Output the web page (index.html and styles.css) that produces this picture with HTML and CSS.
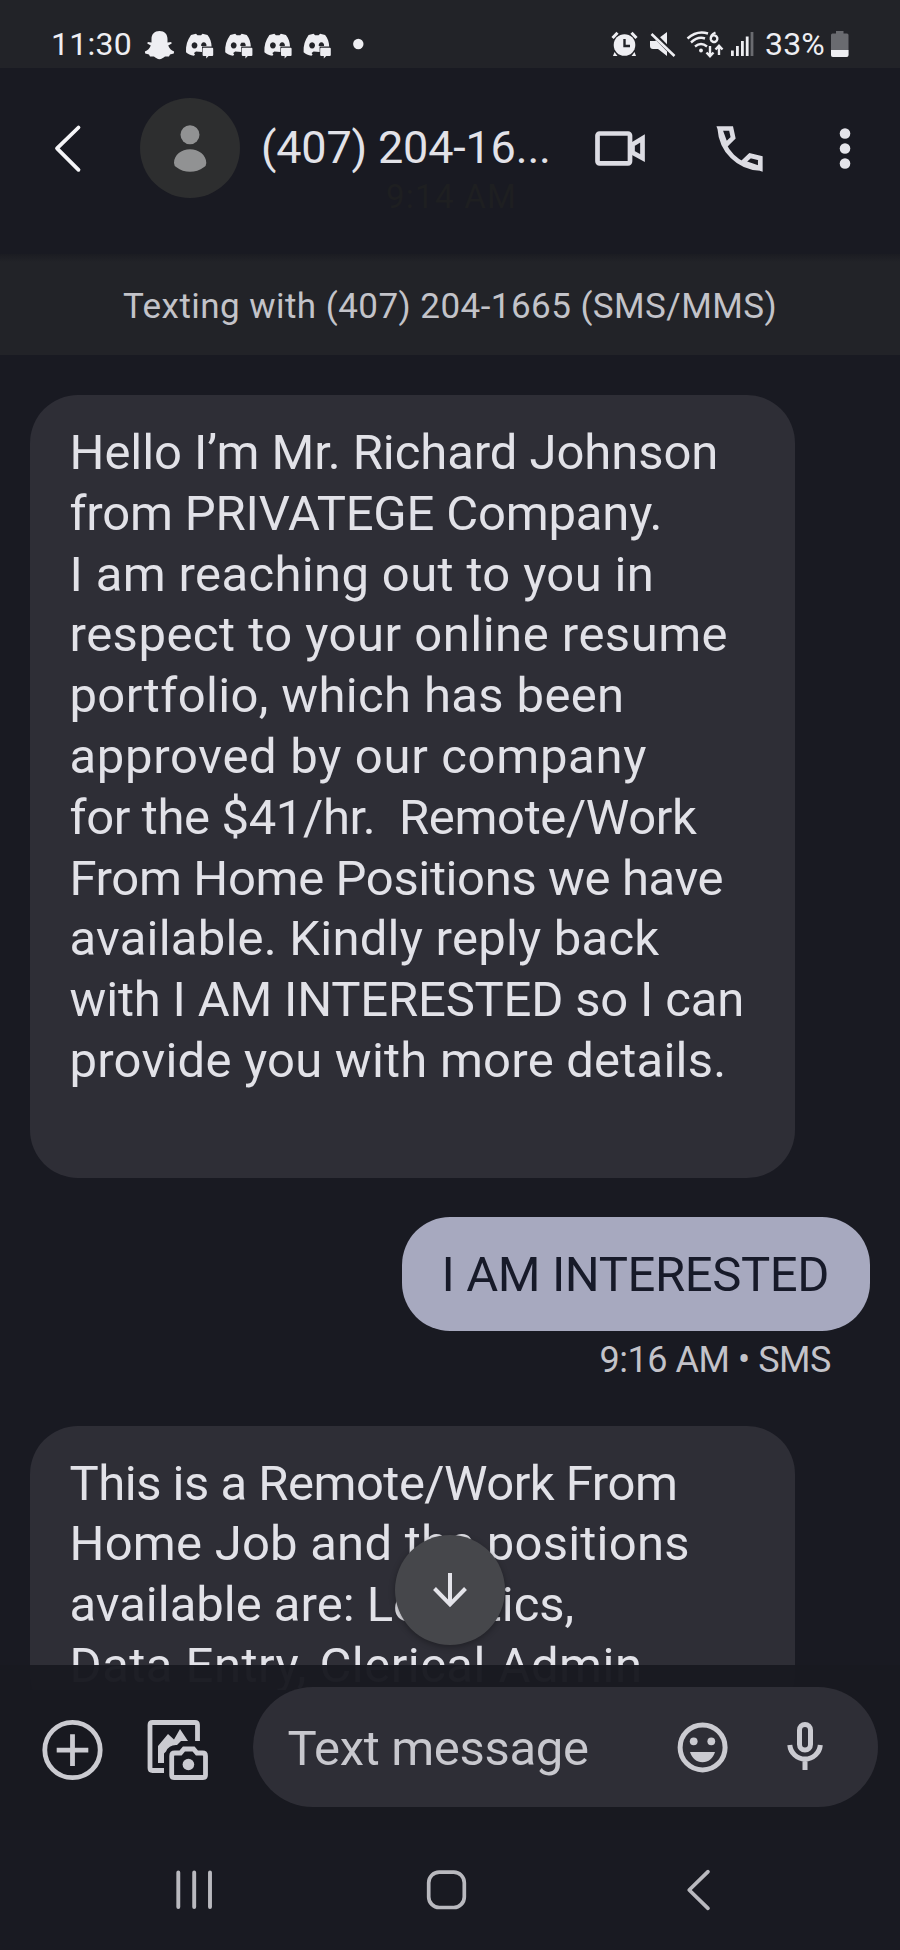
FILE: index.html
```html
<!DOCTYPE html>
<html lang="en">
<head>
<meta charset="utf-8">
<title>Messages</title>
<link rel="stylesheet" href="styles.css">
</head>
<body>
<div class="phone">
  <div class="status">
    <span class="clock">11:30</span>
    <svg class="notif" width="226" height="40" viewBox="140 24 226 40">
      <defs>
        <g id="discord">
          <path fill-rule="evenodd" d="M191 35l5-1.200 1.500 1.400h3.500l1.500-1.400 5 1.200c2.600 3.400 4 7 4.100 11.500h-9.600v5.400l-6-.4-2 1.500 1 1.800-1.200 1c-3.200-.600-5.800-1.800-7.800-3.600-.4-6.500 1.300-12.200 5-17.200zM194.500 42.200a2.900 3.200 0 1 0 .01 0zM203.800 42.200a2.700 3 0 0 0-2.600 3.800h5.200a2.700 3 0 0 0-2.600-3.800z"/>
          <path d="M203.600 47.800h8.600q1 0 1 1v6.200q0 1-1 1h-3.600l-2.400 2.600v-2.600h-2.600q-1 0-1-1v-6.200q0-1 1-1z"/>
        </g>
      </defs>
      <g fill="#eeeef2">
        <path d="M159.500 31c5 0 8 3.200 8 8v3.600l3.700-.7.5 1.700-3.500 2c1.200 3 3 4.800 5.900 6l-.3 1.900-3.800.9-1 2.200-4-.1c-1.800 1.300-3.400 2.700-5.500 2.700s-3.700-1.400-5.500-2.700l-4 .1-1-2.200-3.800-.9-.3-1.900c2.900-1.200 4.700-3 5.900-6l-3.500-2 .5-1.700 3.700.7V39c0-4.800 3-8 8-8z"/>
        <use href="#discord"/>
        <use href="#discord" x="39.200"/>
        <use href="#discord" x="78.400"/>
        <use href="#discord" x="117.600"/>
        <circle cx="358.300" cy="44" r="5.200"/>
      </g>
    </svg>
    <svg class="signals" width="150" height="40" viewBox="608 24 150 40">
      <g fill="#eeeef2">
        <circle cx="624.500" cy="45" r="10.800"/>
        <path d="M614.500 52l-1.500 4h4.500zM634.500 52l1.500 4h-4.500z"/>
        <path d="M612.500 38l5-5.200M636.500 38l-5-5.200" stroke="#eeeef2" stroke-width="3"/>
        <path d="M624.500 39v7h5.500" fill="none" stroke="#222328" stroke-width="2.400"/>
        <path d="M650 41h5l12-9v24l-9-7h-5q-3 0-3-3z"/>
        <path d="M650 30.500l26 26.500" stroke="#222328" stroke-width="5"/>
        <path d="M651.500 34l23 22" stroke="#eeeef2" stroke-width="2.600"/>
        <circle cx="701" cy="50.500" r="1.900"/>
        <path d="M731 50.500h2.800V56H731zM736 46h2.800v10H736zM741 41h2.800v15H741zM745.800 36.500h2.800V56h-2.800z"/>
        <path fill="#6a6b70" d="M750.600 32h2.800v24h-2.800z"/>
      </g>
      <g fill="none" stroke="#eeeef2" stroke-width="2.400">
        <path d="M687.500 38.500q9.500-8.500 20.500-5M691 42.500q7-6.500 14-4M695 46.500q6-4.800 12 0"/>
        <path d="M715.500 32.500c-3 1.200-5 4-4.700 6.700a3.300 3.300 0 1 0 .3-2"/>
        <path d="M710 46v10M706.500 52.500l3.500 3.800 3.500-3.800M719 55V46M715.500 49.500l3.500-3.800 3.500 3.800"/>
      </g>
    </svg>
    <span class="percent">33%</span>
    <svg class="battery" width="20" height="40" viewBox="830 24 20 40">
      <path fill="#6a6b70" d="M836 31h7.500v2.500h3.500q1.500 0 1.500 1.500v20q0 2-2 2h-13.500q-2 0-2-2V35q0-1.500 1.500-1.500h3.500z"/>
      <path fill="#eeeef2" d="M831 50h17.500v5q0 2-2 2H833q-2 0-2-2z"/>
    </svg>
  </div>

  <header class="header">
    <svg class="back" width="40" height="60" viewBox="48 117 40 60">
      <path d="M78.500 126.500L57 147.300l21.500 21.500" fill="none" stroke="#f5f5f8" stroke-width="3.800" stroke-linecap="round" stroke-linejoin="round"/>
    </svg>
    <div class="avatar">
      <svg width="100" height="100" viewBox="140 97 100 100" fill="#919293">
        <circle cx="190" cy="133.700" r="9.500"/>
        <path d="M174 162c0-8 7.500-13.700 16-13.700s16.300 5.700 16.300 13.700q0 3-2.500 4.200c-8 6-19.600 6-27.300 0q-2.500-1.200-2.500-4.200z"/>
      </svg>
    </div>
    <div class="title">
      <span class="number">(407) 204-16...</span>
      <span class="faded-time">9:14 AM</span>
    </div>
    <svg class="actions" width="270" height="60" viewBox="588 117 270 60">
      <g fill="none" stroke="#dcdce3" stroke-width="4.700">
        <rect x="597.500" y="132.500" width="32.500" height="29.800" rx="2"/>
        <path d="M632.500 143.500L642.500 137.500v19.600L632.500 151.500z"/>
        <path d="M719.800 127.500h11.300l2 9.300-7.300 7.200zM742.800 161.500l7.200-6.800 10.300 2.500v10.300zM719.800 127.500c1.500 22 18.500 39 40.500 40"/>
      </g>
      <g fill="#e4e4ea"><circle cx="845" cy="132.500" r="5.300"/><circle cx="845" cy="147.500" r="5.300"/><circle cx="845" cy="162.500" r="5.300"/></g>
    </svg>
  </header>

  <div class="banner">Texting with (407) 204-1665 (SMS/MMS)</div>

  <main class="thread">
    <div class="bubble received">
      <span class="line snug">Hello I’m Mr. Richard Johnson</span>
      <span class="line tight">from PRIVATEGE Company.</span>
      <span class="line wide">I am reaching out to you in</span>
      <span class="line wider">respect to your online resume</span>
      <span class="line wide">portfolio, which has been</span>
      <span class="line widest">approved by our company</span>
      <span class="line tighter">for the $41/hr.&nbsp; Remote/Work</span>
      <span class="line tighter">From Home Positions we have</span>
      <span class="line loose">available. Kindly reply back</span>
      <span class="line tight">with I AM INTERESTED so I can</span>
      <span class="line loose">provide you with more details.</span>
      <span class="line">&nbsp;</span>
    </div>
    <div class="bubble sent">I AM INTERESTED</div>
    <div class="meta">9:16 AM • SMS</div>
    <div class="bubble received">
      <span class="line tightest">This is a Remote/Work From</span>
      <span class="line loose">Home Job and the positions</span>
      <span class="line">available are: Logistics,</span>
      <span class="line wider">Data Entry, Clerical Admin</span>
    </div>
    <div class="jump">
      <svg width="40" height="40" viewBox="430 1570 40 40"><path d="M450 1573v31M434.500 1588.500L450 1604.500l15.500-16" fill="none" stroke="#e4e4ea" stroke-width="4"/></svg>
    </div>
  </main>

  <div class="composer">
    <svg class="tools" width="180" height="70" viewBox="40 1715 180 70">
      <g fill="none" stroke="#cbcbd1" stroke-width="4.800">
        <circle cx="72.500" cy="1750" r="27.700"/>
        <path d="M72.500 1734.300v31.700M56.700 1750.200h31.600"/>
        <path d="M197.500 1741v-16q0-2.500-2.500-2.500h-42.500q-2.500 0-2.500 2.500v43q0 2.500 2.500 2.500H164"/>
        <path d="M171.700 1756q0-3 3-3h5.800l3.500-4h9.500l3.500 4h5.500q3 0 3 3v19q0 2.500-2.500 2.500H174q-2.300 0-2.300-2.500z"/>
      </g>
      <g fill="#cbcbd1">
        <circle cx="188.400" cy="1764.500" r="5.800"/>
        <path d="M158 1763v-17l10-12 6 5.500 6-10.500 8 12h-7l-4 4q-8-.500-11 6.500l-2 2v9.500z"/>
      </g>
    </svg>
    <div class="field">
      <span class="placeholder">Text message</span>
      <svg class="field-icons" width="160" height="70" viewBox="670 1712 160 70">
        <g fill="none" stroke="#cbcbd1" stroke-width="5">
          <circle cx="702.600" cy="1747.400" r="22.500"/>
          <rect x="799.500" y="1724.500" width="11" height="25.500" rx="5.500"/>
          <path d="M789.800 1745a15.300 15.300 0 0 0 30.500 0M805 1760v10"/>
        </g>
        <g fill="#cbcbd1"><circle cx="693.700" cy="1741.300" r="3.900"/><circle cx="711.300" cy="1741.300" r="3.900"/><path d="M690 1752h25c-2 6.500-6.500 10.300-12.500 10.300s-10.500-3.800-12.500-10.300z"/></g>
      </svg>
    </div>
  </div>

  <nav class="nav">
    <svg width="44" height="50" viewBox="172 1865 44 50"><path d="M178.300 1872.500v34.500M194.200 1872.500v34.500M210 1872.500v34.500" stroke="#b9b9bf" stroke-width="3.900" stroke-linecap="round"/></svg>
    <svg width="50" height="50" viewBox="422.500 1865 50 50"><rect x="428.200" y="1872.200" width="35.600" height="35.300" rx="10.500" fill="none" stroke="#b9b9bf" stroke-width="3.700"/></svg>
    <svg width="40" height="50" viewBox="680 1865 40 50"><path d="M708 1871.700l-18.800 18.300 18.800 18.300" fill="none" stroke="#b9b9bf" stroke-width="3.700" stroke-linecap="round" stroke-linejoin="round"/></svg>
  </nav>
</div>
</body>
</html>
```
FILE: styles.css
```css
* { box-sizing: border-box; }

body {
  margin: 0;
  background: #191a22;
  color: #e2e2e8;
  font-family: Roboto, "Noto Sans", sans-serif;
}

svg { display: block; flex: none; }

.phone {
  display: flex;
  flex-direction: column;
  width: 900px;
  height: 1950px;
  overflow: hidden;
  background: #191a22;
}

/* Status bar */
.status {
  display: flex;
  flex: none;
  height: 68px;
  padding: 24px 0 0 51px;
  background: #222328;
  color: #eeeef2;
  font-size: 32px;
  line-height: 41px;
  white-space: nowrap;
}
.clock { width: 89px; letter-spacing: 0.25px; }
.signals { margin-left: 242px; }
.percent { width: 65px; margin-left: 7px; letter-spacing: 0.17px; }

/* Conversation header */
.header {
  display: flex;
  flex: none;
  align-items: center;
  height: 186px;
  padding: 0 0 27px 48px;
}
.avatar {
  margin-left: 52px;
  border-radius: 50%;
  background: #2d2e2f;
}
.title {
  display: grid;
  width: 348px;
  padding-left: 21px;
}
.number, .faded-time { grid-area: 1 / 1; white-space: nowrap; }
.number {
  font-size: 45px;
  line-height: 60px;
  letter-spacing: -0.19px;
}
.faded-time {
  padding: 59px 0 0 125px;
  margin-bottom: -59px;
  color: #1e1f21;
  font-size: 33px;
  line-height: 40px;
  letter-spacing: 1.28px;
}

.banner {
  flex: none;
  height: 101px;
  background: linear-gradient(#1b1c22, #222328 8px);
  color: #c3c3c9;
  font-size: 35px;
  line-height: 105px;
  letter-spacing: 0.45px;
  text-align: center;
}

/* Messages */
.thread {
  position: relative;
  display: flex;
  flex: none;
  flex-direction: column;
  align-items: flex-start;
  height: 1335px;
  padding: 40px 30px 0;
  overflow: hidden;
}
.bubble {
  flex: none;
  border-radius: 48px;
  font-size: 49px;
  line-height: 60.8px;
  white-space: nowrap;
}
.received {
  width: 765px;
  padding: 28px 39.500px 25px;
  background: #2e2e36;
}
.sent {
  align-self: flex-end;
  width: 468.500px;
  height: 114px;
  margin-top: 39px;
  padding: 28px 0 0 40px;
  background: #a7a9bf;
  color: #171a29;
  letter-spacing: -0.4px;
}
.meta {
  flex: none;
  align-self: flex-end;
  height: 95px;
  padding: 8px 39px 0 0;
  color: #c3c3c9;
  font-size: 36px;
  line-height: 42px;
  letter-spacing: -0.45px;
}
.line { display: block; }
.tightest { letter-spacing: -0.5px; }
.tighter { letter-spacing: -0.36px; }
.tight { letter-spacing: -0.18px; }
.snug { letter-spacing: -0.07px; }
.loose { letter-spacing: 0.23px; }
.wide { letter-spacing: 0.36px; }
.wider { letter-spacing: 0.49px; }
.widest { letter-spacing: 0.68px; }

.jump {
  position: absolute;
  top: 1180px;
  left: 395px;
  display: grid;
  place-items: center;
  width: 110px;
  height: 110px;
  border-radius: 50%;
  background: #46474b;
  box-shadow: 0 2px 6px rgba(0, 0, 0, 0.3);
}

/* Composer */
.composer {
  z-index: 1;
  display: flex;
  flex: none;
  height: 165px;
  margin-top: -25px;
  padding: 22px 0 0 40px;
  background: rgba(25, 26, 33, 0.975);
}
.tools { margin-top: 28px; }
.field {
  display: flex;
  width: 625px;
  height: 119.500px;
  margin-left: 32.500px;
  padding-left: 35px;
  border-radius: 60px;
  background: #2e2e36;
}
.placeholder {
  width: 382.500px;
  color: #c8c8ce;
  font-size: 49px;
  line-height: 123px;
  letter-spacing: -0.33px;
}
.field-icons { margin-top: 25px; }

/* System navigation */
.nav {
  display: flex;
  flex: 1;
  padding: 35px 180px 0 172px;
  justify-content: space-between;
}
```
